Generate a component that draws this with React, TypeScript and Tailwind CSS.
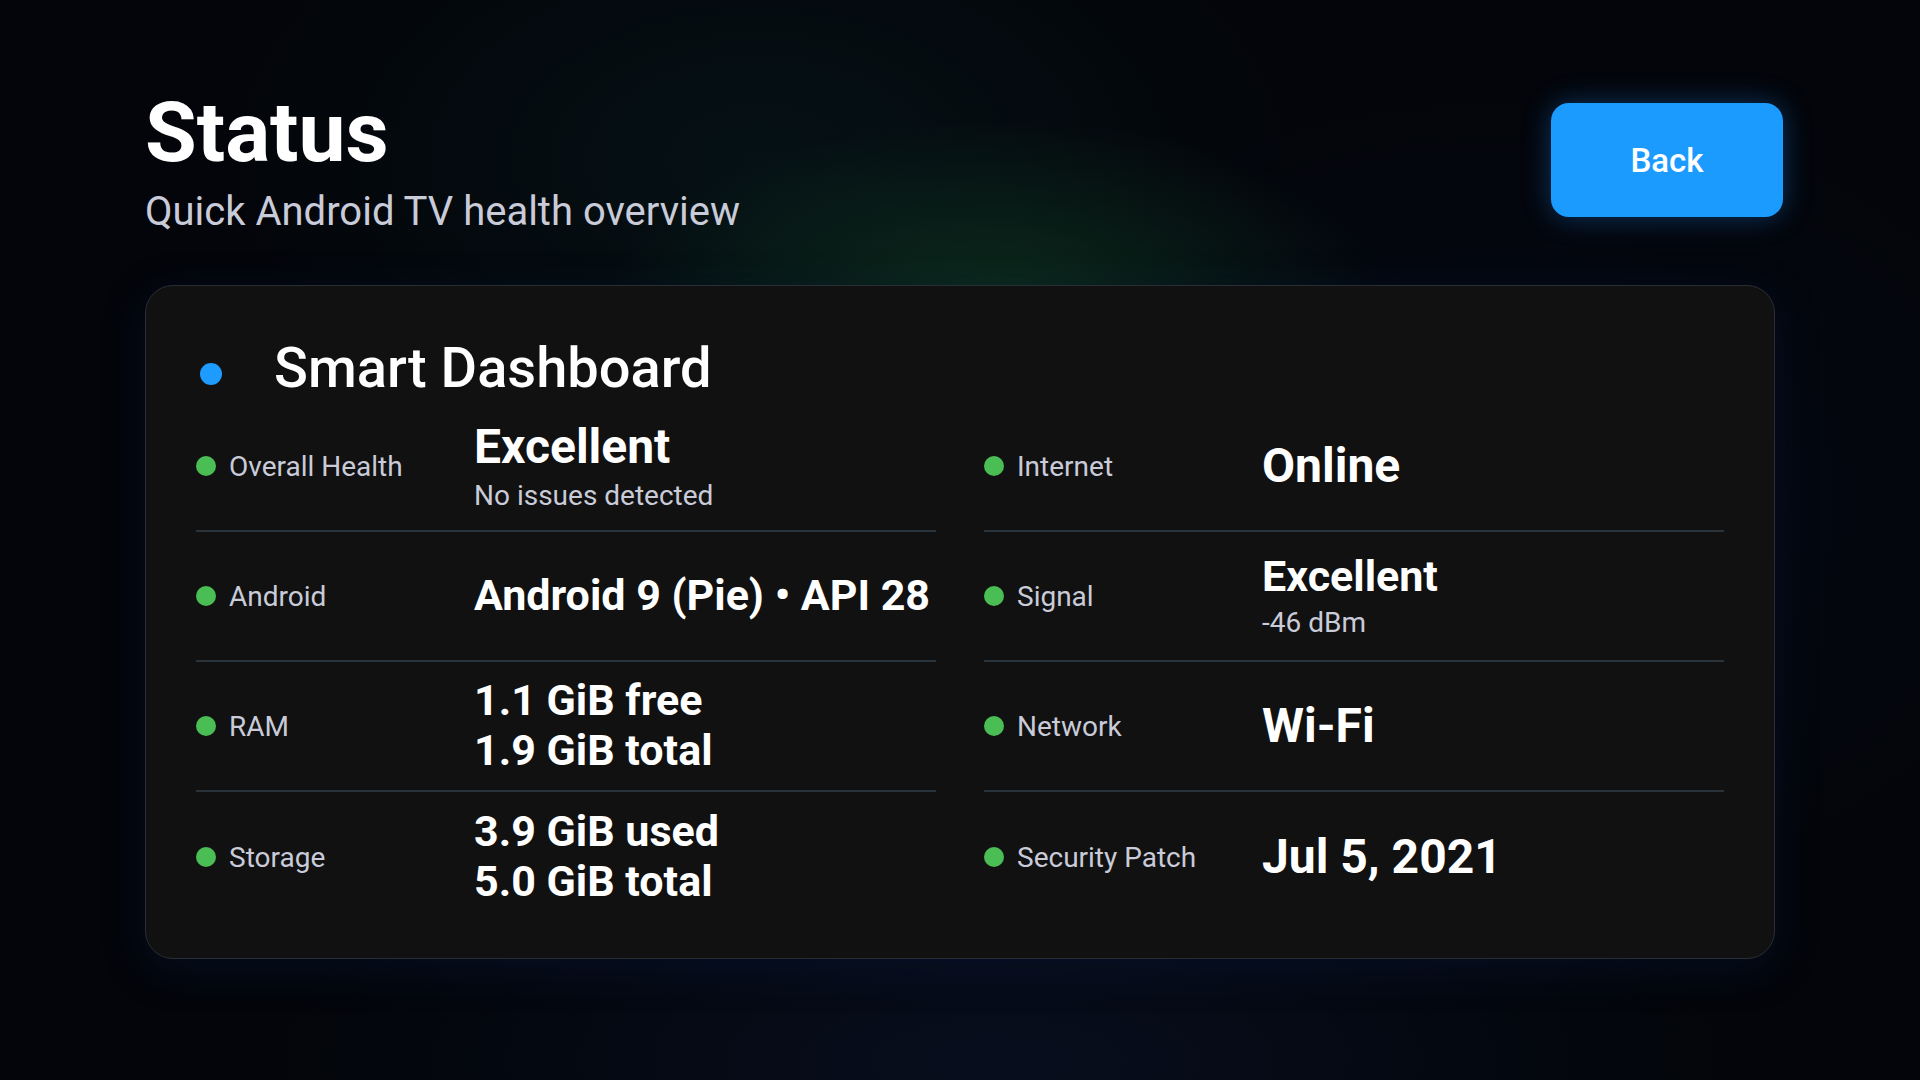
import React from 'react';

type Row = {
  label: string;
  lines: string[];
  size: string;
  sub?: string;
};

const rows: Row[] = [
  { label: 'Overall Health', lines: ['Excellent'], size: 'text-[48px]', sub: 'No issues detected' },
  { label: 'Internet', lines: ['Online'], size: 'text-[48px]' },
  { label: 'Android', lines: ['Android 9 (Pie) • API 28'], size: 'text-[43px]' },
  { label: 'Signal', lines: ['Excellent'], size: 'text-[43px]', sub: '-46 dBm' },
  { label: 'RAM', lines: ['1.1 GiB free', '1.9 GiB total'], size: 'text-[43px]' },
  { label: 'Network', lines: ['Wi-Fi'], size: 'text-[48px]' },
  { label: 'Storage', lines: ['3.9 GiB used', '5.0 GiB total'], size: 'text-[43px]' },
  { label: 'Security Patch', lines: ['Jul 5, 2021'], size: 'text-[48px]' },
];

function StatRow({ row, last }: { row: Row; last: boolean }) {
  return (
    <div
      className={`grid h-[130px] grid-cols-[278px_1fr] items-center ${last ? '' : 'border-b-2 border-[#28333c]'}`}
    >
      <div className="flex items-center gap-[13px]">
        <span className="h-5 w-5 shrink-0 rounded-full bg-[#4bbd55]" />
        <span className="text-[28px] leading-tight text-[#c9cbd8]">{row.label}</span>
      </div>
      <div className="flex flex-col">
        {row.lines.map((line) => (
          <span key={line} className={`${row.size} font-bold leading-[1.16] whitespace-nowrap text-white`}>
            {line}
          </span>
        ))}
        {row.sub && <span className="mt-[4px] text-[28px] leading-[1.2] text-[#c9cbd8]">{row.sub}</span>}
      </div>
    </div>
  );
}

export default function App() {
  return (
    <div className="relative h-[1080px] w-[1920px] overflow-hidden bg-[#03050a] bg-[radial-gradient(ellipse_520px_240px_at_1000px_300px,rgba(24,96,52,0.38),transparent_75%),radial-gradient(ellipse_700px_420px_at_760px_160px,rgba(10,40,40,0.35),transparent_75%),radial-gradient(ellipse_900px_300px_at_1000px_1060px,rgba(12,24,52,0.45),transparent_80%),radial-gradient(ellipse_700px_500px_at_1500px_500px,rgba(6,14,34,0.5),transparent_80%)] font-['Roboto',sans-serif]">
      <header className="flex items-start justify-between pl-[145px] pr-[137px] pt-[91px]">
        <div>
          <h1 className="text-[84px] font-bold leading-none text-white">Status</h1>
          <p className="mt-[13px] text-[40px] leading-[1.2] text-[#c9cbd9]">Quick Android TV health overview</p>
        </div>
        <button
          type="button"
          className="mt-[12px] h-[114px] w-[232px] rounded-[18px] bg-[#1c9bff] pt-[2px] text-[33px] font-medium text-white shadow-[0_0_28px_rgba(28,140,255,0.35)]"
        >
          Back
        </button>
      </header>

      <section className="mx-[145px] mt-[49px] rounded-[28px] border border-[#2a2d33] bg-[#111111] px-[50px] pb-[36px] pt-[49px] shadow-[0_10px_40px_rgba(10,30,70,0.35)]">
        <div className="flex h-[67px] items-center gap-[52px] pl-[4px]">
          <span className="h-[22px] w-[22px] translate-y-[5px] rounded-full bg-[#1e9bff]" />
          <h2 className="text-[56px] font-medium leading-[1.2] text-white">Smart Dashboard</h2>
        </div>
        <div className="grid grid-cols-2 gap-x-[48px]">
          {rows.map((row, i) => (
            <StatRow key={row.label} row={row} last={i >= rows.length - 2} />
          ))}
        </div>
      </section>
    </div>
  );
}
